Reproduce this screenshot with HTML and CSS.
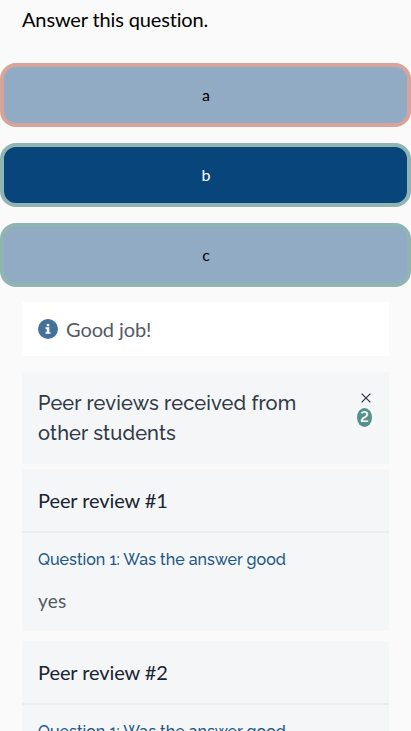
FILE: index.html
```html
<!DOCTYPE html>
<html lang="en">
<head>
<meta charset="utf-8">
<meta name="viewport" content="width=device-width, initial-scale=1">
<title>Quiz</title>
<link rel="stylesheet" href="styles.css">
</head>
<body>
<p class="prompt">Answer this question.</p>
<div class="options">
  <button class="option wrong">a</button>
  <button class="option correct selected">b</button>
  <button class="option correct">c</button>
</div>
<main class="content">
  <div class="feedback">
    <svg class="info" viewBox="0 0 20 20"><circle cx="10" cy="10" r="10" fill="#44719a"/><path fill="#fff" d="M8.7 5h2.6v2.3H8.7zM7.5 8.3h3.8v4.9h1.2v1.6h-5v-1.6h1.2V9.9H7.5z"/></svg>
    <span>Good job!</span>
  </div>
  <section class="summary">
    <h2 class="summary-title">Peer reviews received from<br>other students</h2>
    <div class="toggle">
      <svg class="close" viewBox="0 0 10 10"><path d="M.6.6l8.8 8.8M9.4.6L.6 9.4" stroke="#313947" stroke-width="1.3"/></svg>
      <span class="count">2</span>
    </div>
  </section>
  <article class="review">
    <h3 class="review-title">Peer review #1</h3>
    <div class="review-body">
      <p class="question">Question 1: Was the answer good</p>
      <p class="answer">yes</p>
    </div>
  </article>
  <article class="review">
    <h3 class="review-title">Peer review #2</h3>
    <div class="review-body">
      <p class="question">Question 1: Was the answer good</p>
      <p class="answer">yes</p>
    </div>
  </article>
</main>
</body>
</html>
```
FILE: styles.css
```css
* { box-sizing: border-box; }
html { height: 100%; overflow: hidden; }
body {
  margin: 0;
  height: 100%;
  overflow: hidden;
  background: #fafafa;
  color: #000;
  font-family: Lato, sans-serif;
  font-size: 20px;
  font-variant-ligatures: none;
}
h2, h3, p { margin: 0; font-weight: 400; }
.prompt { padding: 4px 22px 0; line-height: 30px; letter-spacing: -0.14px; }
.options { display: flex; flex-direction: column; gap: 16px; margin-top: 29px; }
.option {
  height: 64px;
  padding: 0 0 0 1px;
  border: 4px solid;
  border-radius: 16px;
  background: #92abc5;
  color: #000;
  font: 16px/24px Lato, sans-serif;
}
.wrong { border-color: #d6a49a; }
.correct { border-color: #8fb4b2; }
.selected { background: #08457a; color: #fff; }
.content { margin: 15px 22px 0; }
.feedback {
  display: flex;
  align-items: center;
  gap: 8px;
  height: 54px;
  padding: 0 16px;
  background: #fff;
  color: #535a66;
  line-height: 26px;
  letter-spacing: -0.1px;
}
.info { width: 20px; height: 20px; }
.summary {
  display: flex;
  justify-content: space-between;
  height: 92px;
  margin-top: 16px;
  padding: 16px;
  background: #f5f6f7;
  color: #313947;
}
.summary-title { font: 500 20px/30px Raleway, Lato, sans-serif; letter-spacing: 0.14px; white-space: nowrap; }
.toggle { display: flex; flex-direction: column; align-items: center; padding-top: 5px; }
.close { width: 10px; height: 10px; margin-left: 2px; }
.count {
  width: 15px;
  height: 19px;
  margin-top: 5px;
  border-radius: 50%;
  background: #55918b;
  color: #fff;
  font: 600 14px/19px Raleway, Lato, sans-serif;
  font-feature-settings: "lnum";
  text-align: center;
}
.toggle { margin-right: 1px; }
.review { height: 162px; margin-top: 5px; background: #f5f6f7; }
.review + .review { margin-top: 10px; }
.review-title {
  height: 64px;
  padding: 0 16px;
  border-bottom: 2px solid #ebedee;
  color: #1a2333;
  font-size: 20px;
  line-height: 62px;
  letter-spacing: -0.08px;
}
.review-body { padding: 14px 16px; }
.question { color: #215887; font: 500 16px/26px Raleway, Lato, sans-serif; letter-spacing: 0.02px; white-space: nowrap; }
.answer { margin-top: 12px; color: #535a66; font-size: 19px; letter-spacing: 0.2px; line-height: 32px; }
```
